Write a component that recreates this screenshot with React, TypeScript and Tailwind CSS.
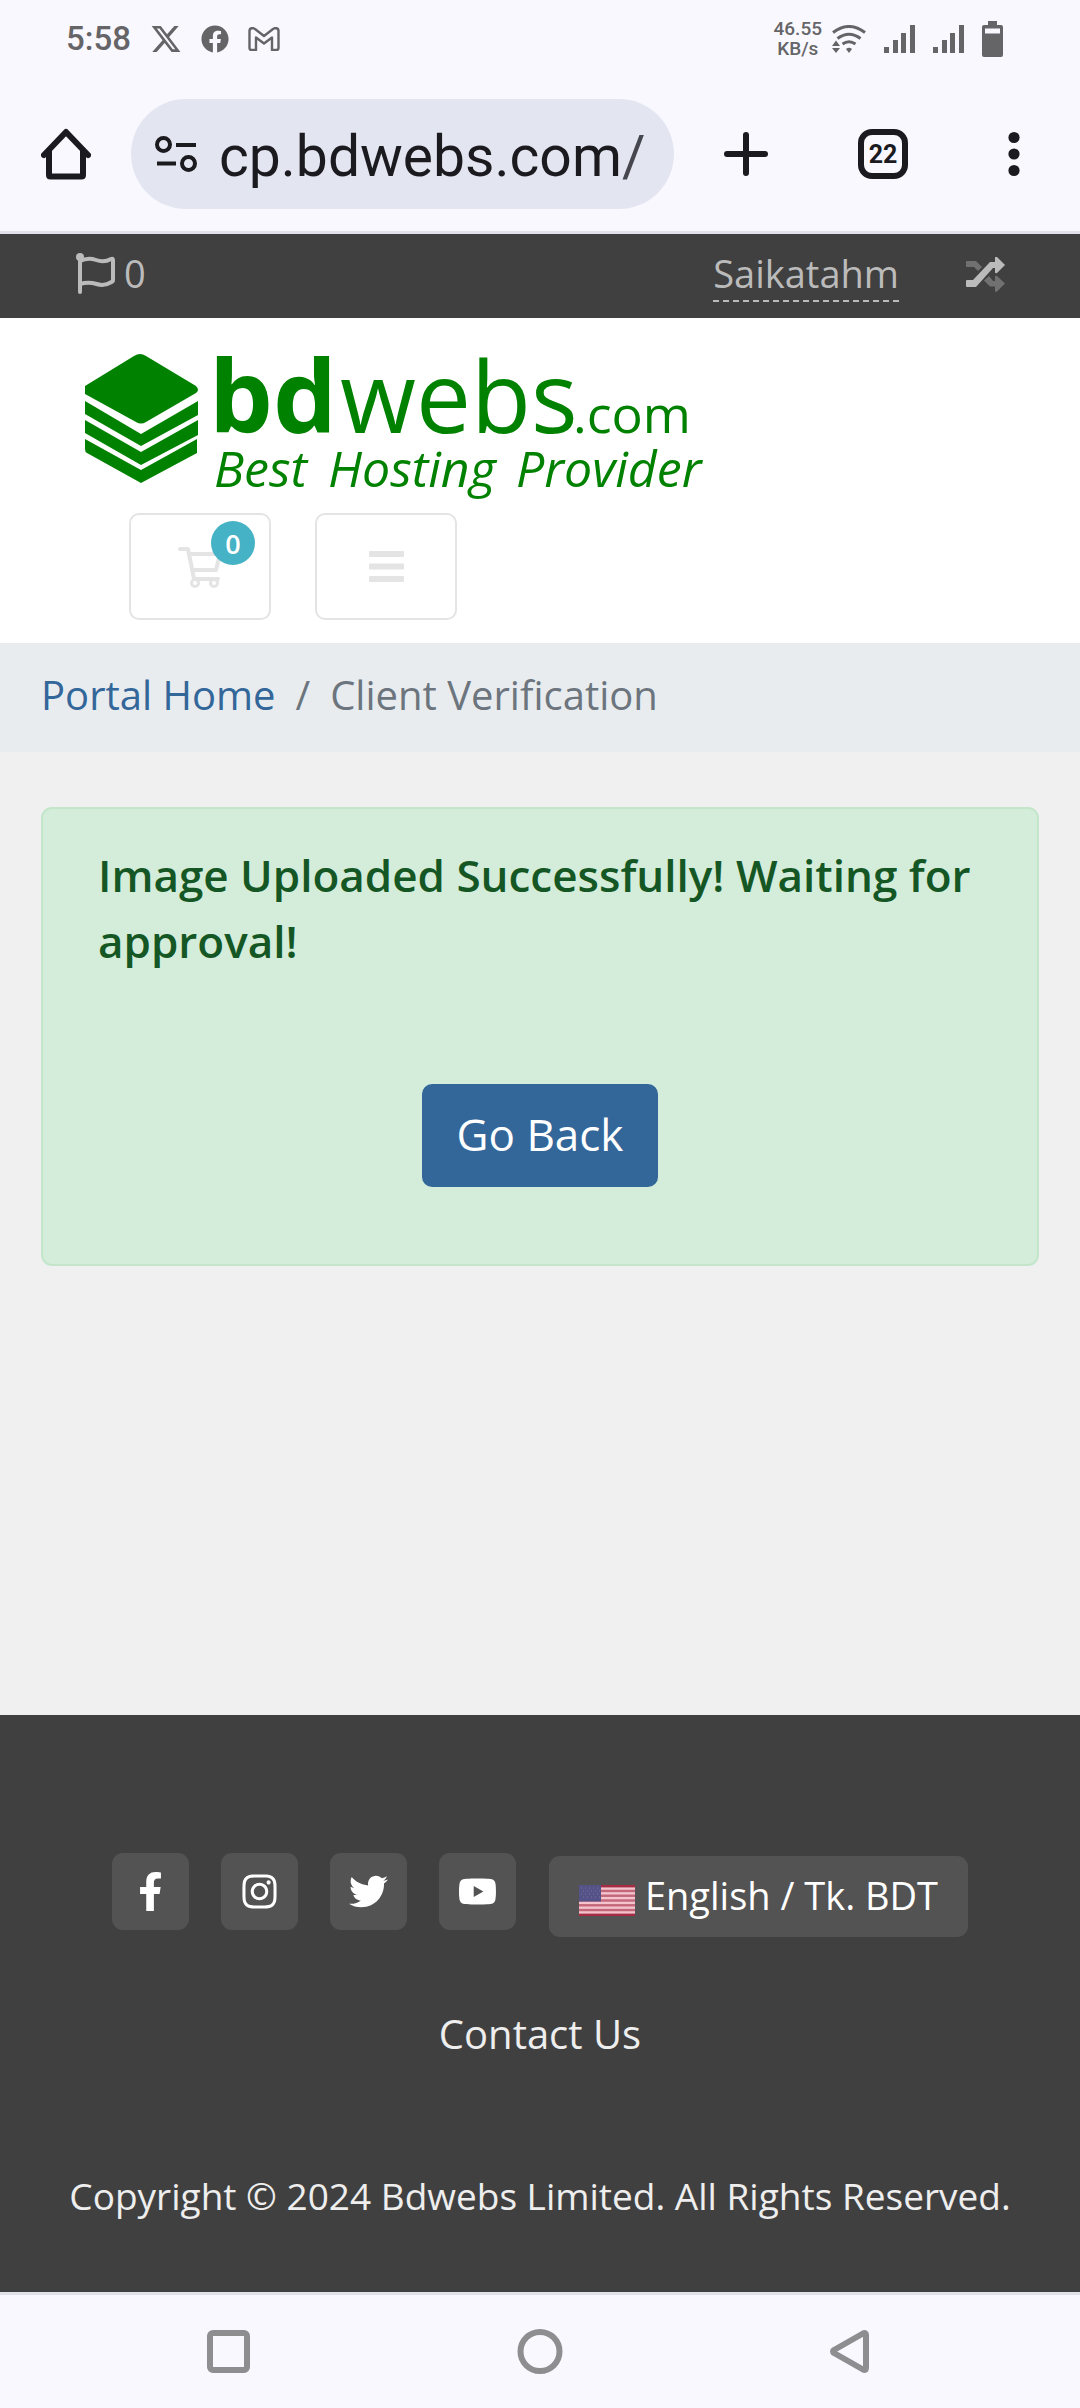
import type { ReactNode } from 'react'
import { FaFacebook, FaFacebookF, FaInstagram, FaTwitter, FaYoutube } from 'react-icons/fa'
import { FaXTwitter } from 'react-icons/fa6'

const socials = [
  { label: 'Facebook', icon: <FaFacebookF size={39} /> },
  { label: 'Instagram', icon: <FaInstagram size={39} /> },
  { label: 'Twitter', icon: <FaTwitter size={39} /> },
  { label: 'YouTube', icon: <FaYoutube size={39} /> },
]

const stripes = [0, 1, 2, 3, 4, 5, 6]

function SignalBars() {
  return (
    <svg width="31" height="28" viewBox="0 0 31 28" fill="currentColor">
      <path d="M0 22h5v6H0zM9 15h5v13H9zM17 8h5v20h-5zM26 0h5v28h-5z" />
    </svg>
  )
}

function StatusBar() {
  return (
    <div className="flex h-[76px] items-center justify-between pt-0.5 pr-[77px] pl-[66px] font-[Roboto,sans-serif] text-[#656568]">
      <div className="flex items-center gap-[19px]">
        <span className="text-[33px] leading-10 font-medium">5:58</span>
        <FaXTwitter size={32} />
        <FaFacebook size={28} />
        <svg width="32" height="24" viewBox="0 0 32 24" fill="none" stroke="currentColor" strokeWidth="2.400" strokeLinejoin="round">
          <path d="M1.500 4v17q0 2 2 2H8V10.500l8 6 8-6V23h4.500q2 0 2-2V4q0-3-3.500-3L25 2l-9 7-9-7L5 1Q1.500 1 1.500 4z" />
        </svg>
      </div>
      <div className="flex items-center gap-[18px]">
        <div className="flex items-center gap-2.5">
          <div className="text-center text-[19px] leading-5 font-medium">
            46.55
            <br />
            KB/s
          </div>
          <svg width="34" height="28" viewBox="0 0 34 28" fill="none" stroke="currentColor" strokeWidth="3">
            <path d="M1 7.500Q17-4.500 33 7.500M5.500 13.500Q17 5 28.500 13.500M10.500 19Q17 14.500 23.500 19" />
            <path d="M4 15.500 8 21H0zM4 28 8 23H0zM17 28l3-4q-3-2.500-6 0z" fill="currentColor" stroke="none" />
          </svg>
        </div>
        <SignalBars />
        <SignalBars />
        <svg width="21" height="36" viewBox="0 0 21 36" fill="currentColor">
          <path fillRule="evenodd" d="M6 0h9v4h4q2 0 2 2v28q0 2-2 2H2q-2 0-2-2V6q0-2 2-2h4zM3 7.500v5h15v-5z" />
        </svg>
      </div>
    </div>
  )
}

function BrowserBar() {
  return (
    <div className="flex items-center border-b-[3px] border-[#e2e2ea] pt-[23px] pr-[50px] pb-[22px] pl-[41px] text-[#1b1b1f]">
      <button type="button" aria-label="Home">
        <svg width="50" height="52" viewBox="0 0 50 52" fill="none" stroke="currentColor" strokeWidth="6" strokeLinejoin="round" strokeLinecap="round">
          <path d="M3 27 25 4l22 23" />
          <path d="M8 23v24q0 1.500 1.500 1.500h31Q42 48.500 42 47V23" />
        </svg>
      </button>
      <button
        type="button"
        aria-label="Address bar"
        className="ml-10 flex h-[110px] min-w-0 flex-1 items-center gap-[22px] overflow-hidden rounded-full bg-[#e3e5f1] pl-6"
      >
        <svg className="shrink-0" width="42" height="36" viewBox="0 0 42 36" fill="none" stroke="currentColor" strokeWidth="4">
          <circle cx="8.500" cy="8.500" r="6.500" />
          <circle cx="33.500" cy="27.500" r="6.500" />
          <path d="M21 9h20M2 27.500h19" />
        </svg>
        <span className="pt-1 font-[Roboto,sans-serif] text-[57px] leading-none whitespace-nowrap">
          cp.bdwebs.com<span className="text-[#46464f]">/</span>
        </span>
      </button>
      <div className="ml-[50px] flex items-center gap-[90px]">
        <button type="button" aria-label="New tab">
          <svg width="44" height="44" viewBox="0 0 44 44" stroke="currentColor" strokeWidth="6" strokeLinecap="round">
            <path d="M22 3v38M3 22h38" />
          </svg>
        </button>
        <button
          type="button"
          aria-label="Switch tabs"
          className="flex size-[50px] items-center justify-center rounded-[14px] border-[6px] border-[#1b1b1f] font-[Roboto,sans-serif] text-[25px] leading-none font-bold"
        >
          22
        </button>
        <button type="button" aria-label="More options" className="flex w-8 justify-center">
          <svg width="12" height="46" viewBox="0 0 12 46" fill="currentColor">
            <circle cx="6" cy="6.500" r="5.600" />
            <circle cx="6" cy="23" r="5.600" />
            <circle cx="6" cy="39.500" r="5.600" />
          </svg>
        </button>
      </div>
    </div>
  )
}

function TopBar() {
  return (
    <div className="flex h-[84px] items-start justify-between bg-[#404040] pt-3 pr-[75px] pl-[76px] text-[38px] leading-[54px] text-[#bbbbbb]">
      <a href="#notifications" className="flex items-center gap-2">
        <svg width="40" height="41" viewBox="0 0 40 41" fill="none" stroke="currentColor" strokeWidth="4" strokeLinejoin="round">
          <circle cx="4" cy="4" r="4" fill="currentColor" stroke="none" />
          <path d="M4 4v35" strokeLinecap="round" />
          <path d="M4 8q8-4 16-1t15-1q2-1 2 1v20q0 1.500-1.500 2-7 4.500-15 2T4 31" />
        </svg>
        0
      </a>
      <div className="flex items-center gap-[67px]">
        <a href="#account" className="border-b-2 border-dashed border-[#bbbbbb]">
          Saikatahm
        </a>
        <a href="#switch" aria-label="Switch account">
          <svg width="39" height="35" viewBox="0 0 39 35" fill="currentColor">
            <path opacity=".4" d="M0 5q0-1 1-1h9l6 6-4 4-4-4H1q-1 0-1-1zM23 19l4 5h2v-4q0-2 2-1l8 7.500-8 8q-2 1-2-1v-4h-5l-6-6z" />
            <path d="M0 24q0-1 1-1h6L24 5h5V1q0-2 2-1l8 8-8 8q-2 1-2-1v-4h-2L10 30H1q-1 0-1-1z" />
          </svg>
        </a>
      </div>
    </div>
  )
}

function Logo() {
  return (
    <svg width="619" height="145" viewBox="0 0 619 145" fill="#008200" role="img" aria-label="bdwebs.com" className="overflow-visible">
      <path d="M49 2q6-4 12 0l50 30q4 4 0 7L61 68q-5 3-10 0L0 40v-8z" />
      <path d="M0 47l56 33 57-33v14L56 92 0 60zM0 66l56 32 57-32v15l-57 30L0 79zM0 85l56 31 56-31v14l-56 30L2 99q-2-1-2-4z" />
      <g className="font-['Open_Sans',sans-serif]">
        <text x="124" y="79" fontSize="101" fontWeight="700">bd</text>
        <text x="255" y="79" fontSize="98" fontWeight="500">webs</text>
        <text x="488" y="79" fontSize="52" fontWeight="500">.com</text>
        <g fontSize="50" fontStyle="italic" fontWeight="500">
          <text x="129" y="133">Best</text>
          <text x="243" y="133">Hosting</text>
          <text x="431" y="133">Provider</text>
        </g>
      </g>
    </svg>
  )
}

function HeaderButton({ label, children }: { label: string; children: ReactNode }) {
  return (
    <button
      type="button"
      aria-label={label}
      className="relative flex h-[107px] w-[142px] items-center justify-center rounded-[10px] border-2 border-[#e4e4e4] text-[#e4e4e4]"
    >
      {children}
    </button>
  )
}

function Header() {
  return (
    <header className="bg-white px-[85px] pt-9 pb-[23px]">
      <a href="#home" className="block">
        <Logo />
      </a>
      <div className="mt-3.5 flex gap-11 pl-11">
        <HeaderButton label="Shopping cart, 0 items">
          <svg width="45" height="42" viewBox="0 0 45 42" fill="none" stroke="currentColor" strokeWidth="4" strokeLinejoin="round">
            <path d="M2 3h8l6 30h24" strokeLinecap="round" />
            <path d="M11 8h31l-4 16H15" />
            <circle cx="17" cy="37" r="3.500" strokeWidth="3" />
            <circle cx="36" cy="37" r="3.500" strokeWidth="3" />
          </svg>
          <span className="absolute top-1.5 right-3.5 flex size-11 items-center justify-center rounded-full bg-[#45b2c5] text-[27px] leading-none font-semibold text-white">
            0
          </span>
        </HeaderButton>
        <HeaderButton label="Toggle menu">
          <svg width="35" height="31" viewBox="0 0 35 31" fill="currentColor">
            <rect width="35" height="6" rx="1" />
            <rect y="12.500" width="35" height="6" rx="1" />
            <rect y="25" width="35" height="6" rx="1" />
          </svg>
        </HeaderButton>
      </div>
    </header>
  )
}

function Breadcrumb() {
  return (
    <nav aria-label="breadcrumb" className="bg-[#e8ecef] px-[41px] pt-6 pb-[29px]">
      <ol className="flex gap-5 text-[40px] leading-14 text-[#6c757d]">
        <li>
          <a href="#portal" className="text-[#336699]">Portal Home</a>
        </li>
        <li aria-hidden="true">/</li>
        <li>Client Verification</li>
      </ol>
    </nav>
  )
}

function UsFlag() {
  return (
    <svg width="56" height="38" viewBox="0 -7 56 38" className="shrink-0">
      <rect width="56" height="31" fill="#f3c4cd" />
      {stripes.map((n) => (
        <rect key={n} y={n * 4.77} width="56" height="2.400" fill={n === 0 || n === 6 ? '#a52c43' : '#c4677a'} />
      ))}
      <rect width="22" height="16.500" fill="#545286" />
      <path d="M2 3h19M4 6h17M2 9h19M4 12h17" stroke="#76749f" strokeWidth="1" strokeDasharray="1 3" />
    </svg>
  )
}

function Footer() {
  return (
    <footer className="bg-[#404040] px-10 pt-[138px] pb-[66px] text-center text-[40px] leading-[60px] text-[#eeeeee]">
      <div className="flex items-start justify-center gap-[33px]">
        <ul className="flex gap-8">
          {socials.map((s) => (
            <li key={s.label}>
              <a
                href="#social"
                aria-label={s.label}
                className="flex size-[77px] items-center justify-center rounded-[11px] bg-[#535353] text-white"
              >
                {s.icon}
              </a>
            </li>
          ))}
        </ul>
        <button
          type="button"
          className="mt-[3px] flex h-[81px] items-center gap-2.5 rounded-[11px] bg-[#535353] px-[30px] text-[38px] leading-none text-white"
        >
          <UsFlag />
          <span className="pb-1">English / Tk. BDT</span>
        </button>
      </div>
      <p className="mt-[67px]">
        <a href="#contact">Contact Us</a>
      </p>
      <p className="mt-[102px] text-[37px]">Copyright © 2024 Bdwebs Limited. All Rights Reserved.</p>
    </footer>
  )
}

function NavigationBar() {
  return (
    <div className="flex h-[116px] items-center justify-between border-t-[3px] border-[#e2e2ea] px-[205px] text-[#8e8e91]">
      <button type="button" aria-label="Recent apps">
        <svg width="46" height="46" viewBox="0 0 46 46" fill="none" stroke="currentColor" strokeWidth="6">
          <rect x="5" y="4" width="37" height="37" rx="3" />
        </svg>
      </button>
      <button type="button" aria-label="Home screen">
        <svg width="46" height="46" viewBox="0 0 46 46" fill="none" stroke="currentColor" strokeWidth="6">
          <circle cx="23" cy="22.500" r="19.500" />
        </svg>
      </button>
      <button type="button" aria-label="Back">
        <svg width="46" height="46" viewBox="0 0 46 46" fill="none" stroke="currentColor" strokeWidth="6" strokeLinejoin="round">
          <path d="M37 6q0-3-3-1.500L5 21q-2 1.500 0 3l29 16.500q3 1.500 3-1.500z" />
        </svg>
      </button>
    </div>
  )
}

export default function App() {
  return (
    <div className="flex min-h-screen flex-col bg-[#f9f8ff] font-['Open_Sans',sans-serif]">
      <StatusBar />
      <BrowserBar />
      <TopBar />
      <Header />
      <Breadcrumb />
      <main className="flex-1 bg-[#f0f0f0] px-[41px] pt-[55px]">
        <div
          role="alert"
          className="flex flex-col items-center rounded-[11px] border-2 border-[#c3e6cb] bg-[#d4edda] px-[55px] pt-[33px] pb-[77px]"
        >
          <p className="w-full text-[44px] leading-[66px] font-semibold text-[#155724]">
            Image Uploaded Successfully! Waiting for approval!
          </p>
          <button
            type="button"
            className="mt-[110px] h-[103px] rounded-[10px] bg-[#336699] px-[35px] pb-1 text-[44px] leading-none text-white"
          >
            Go Back
          </button>
        </div>
      </main>
      <Footer />
      <NavigationBar />
    </div>
  )
}
